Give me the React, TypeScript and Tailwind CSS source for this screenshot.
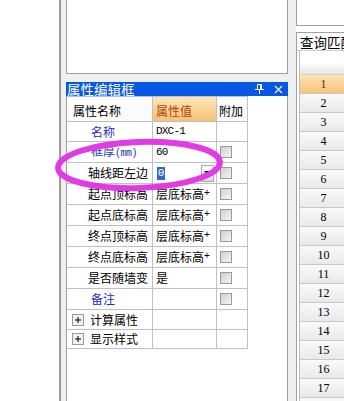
import React from 'react';

type Row = {
  name: string;
  blue?: boolean;
  value?: React.ReactNode;
  check?: boolean;
  group?: boolean;
  h: string;
};

const Check = () => (
  <span className="block w-[12px] h-[12px] border border-[#9a9a9a] bg-linear-to-br from-[#cfcfcf] to-[#f6f6f6]" />
);

const Plus = () => (
  <svg width="12" height="12" viewBox="0 0 12 12" className="shrink-0">
    <rect x="0.5" y="0.5" width="11" height="11" fill="#f2f2f2" stroke="#9a9a9a" />
    <path d="M3 6h6M6 3v6" stroke="#000" strokeWidth="1" />
  </svg>
);

const Mono = ({ children }: { children: React.ReactNode }) => (
  <span className="font-['Liberation_Mono',monospace] text-[11px] tracking-[-0.8px]">{children}</span>
);

const Elev = () => (
  <span>
    层底标高<span className="font-['Liberation_Sans',sans-serif] text-[10px] align-top">+</span>
  </span>
);

const Editor = () => (
  <div className="flex items-center w-full h-full">
    <span className="ml-[1px] h-[13px] w-[8px] bg-[#316ac5] text-white font-['Liberation_Mono',monospace] text-[11px] leading-[13px] text-center">
      0
    </span>
    <span className="ml-auto mr-[2px] w-[13px] h-[17px] border border-[#a8a8a8] bg-linear-to-b from-white to-[#dcdcdc] flex items-center justify-center">
      <svg width="7" height="4" viewBox="0 0 7 4">
        <path d="M0 0h7L3.5 4z" fill="#000" />
      </svg>
    </span>
  </div>
);

const rows: Row[] = [
  { name: '名称', blue: true, value: <Mono>DXC-1</Mono>, h: 'h-[20px]' },
  { name: '框厚', blue: true, value: <Mono>60</Mono>, check: true, h: 'h-[21px]' },
  { name: '轴线距左边', value: 'editor', check: true, h: 'h-[21px]' },
  { name: '起点顶标高', value: <Elev />, check: true, h: 'h-[21px]' },
  { name: '起点底标高', value: <Elev />, check: true, h: 'h-[21px]' },
  { name: '终点顶标高', value: <Elev />, check: true, h: 'h-[21px]' },
  { name: '终点底标高', value: <Elev />, check: true, h: 'h-[21px]' },
  { name: '是否随墙变', value: '是', check: true, h: 'h-[21px]' },
  { name: '备注', blue: true, check: true, h: 'h-[21px]' },
  { name: '计算属性', group: true, h: 'h-[20px]' },
  { name: '显示样式', group: true, h: 'h-[19px]' },
];

function PropertyPanel() {
  return (
    <div className="flex-1 flex flex-col min-h-0">
      <div className="h-[14px] shrink-0 bg-[#0756e4] flex items-center text-white text-[13.5px] leading-[14px] pl-[1px] pr-[3px]">
        <span>属性编辑框</span>
        <svg width="9" height="10" viewBox="0 0 9 10" className="ml-auto mr-[10px]">
          <path d="M2.5 0.5h4M2.5 0.5v5M5.5 0.5v5M6.5 0.5v5M0 5.5h9M4.5 5.5v4.5" stroke="#fff" strokeWidth="1" />
        </svg>
        <svg width="9" height="9" viewBox="0 0 9 9" className="mr-[2px]">
          <path d="M1 1l7 7M8 1l-7 7" stroke="#fff" strokeWidth="1.1" />
        </svg>
      </div>
      <div className="flex-1 bg-white border-x border-[#a0a0a0]">
        <div className="w-[181px] border-t border-[#c0c0c0]">
          <div className="flex h-[25px] border-b border-[#c0c0c0] text-[12px]">
            <div className="w-[86px] border-r border-[#c0c0c0] pl-[6px] pt-[3px] flex items-center bg-[#fbfbfb]">属性名称</div>
            <div className="w-[64px] border-r border-[#c0c0c0] pl-[3px] pt-[3px] flex items-center bg-linear-to-b from-[#fde6bb] to-[#f5c172] text-[#b7410e]">
              属性值
            </div>
            <div className="w-[31px] border-r border-[#c0c0c0] pl-[2px] pt-[3px] flex items-center bg-[#fbfbfb]">附加</div>
          </div>
          {rows.map((r) => (
            <div key={r.name} className={`flex ${r.h} border-b border-[#c0c0c0] text-[12px]`}>
              <div
                className={`w-[86px] border-r border-[#c0c0c0] flex items-center whitespace-nowrap ${
                  r.group ? 'pl-[5px] gap-[6px]' : r.blue ? 'pl-[24px] text-[#1c2fc4]' : 'pl-[21px]'
                }`}
              >
                {r.group && <Plus />}
                <span>
                  {r.name}
                  {r.name === '框厚' && (
                    <span className="font-['Liberation_Mono',monospace] text-[10px] tracking-[-0.5px]">(mm)</span>
                  )}
                </span>
              </div>
              <div className="w-[64px] border-r border-[#c0c0c0] flex items-center pl-[3px] whitespace-nowrap overflow-hidden">
                {r.value === 'editor' ? <Editor /> : r.value}
              </div>
              <div className="w-[31px] border-r border-[#c0c0c0] flex items-center pl-[3px]">
                {r.check && <Check />}
              </div>
            </div>
          ))}
        </div>
      </div>
    </div>
  );
}

function RightPanel() {
  const nums = Array.from({ length: 18 }, (_, i) => i + 1);
  return (
    <div className="flex-1 flex flex-col min-w-0">
      <div className="h-[26px] shrink-0 bg-white border-l border-b border-[#a0a0a0]" />
      <div className="h-[6px] shrink-0" />
      <div className="flex-1 flex flex-col bg-white border-l border-t border-[#a0a0a0] min-h-0">
        <div className="h-[17px] shrink-0 pl-[3px] pt-[1px] text-[13.5px] leading-[17px] whitespace-nowrap">查询匹配</div>
        <div className="flex-1 flex pl-[2px] border-t border-[#d0d0d0]">
          <div className="w-[48px] shrink-0 flex flex-col border-l border-[#bdbdbd]">
            <div className="h-[24px] shrink-0 bg-linear-to-b from-white via-white to-[#e6e6e6] border-b border-[#d0d0d0]" />
            {nums.map((n) => (
              <div
                key={n}
                className={`h-[19px] shrink-0 flex items-center justify-center border-b border-[#c8c8c8] font-['Liberation_Serif',serif] text-[12px] ${
                  n === 1
                    ? 'bg-linear-to-b from-[#fde3b2] to-[#f7c37b] text-[#7a1d00]'
                    : 'bg-linear-to-b from-[#fafafa] to-[#e9e9e9]'
                }`}
              >
                {n}
              </div>
            ))}
          </div>
        </div>
      </div>
    </div>
  );
}

export default function App() {
  return (
    <div className="relative flex w-[344px] h-[401px] overflow-hidden bg-white text-black font-['Noto_Sans_CJK_SC','Liberation_Sans',sans-serif] leading-none">
      <div className="w-[59px] shrink-0 bg-white" />
      <div className="w-[2px] shrink-0 bg-[#9a9a9a]" />
      <div className="w-[235px] shrink-0 bg-[#efefef] pl-[5px] pr-[8px] flex flex-col">
        <div className="h-[74px] shrink-0 bg-white border-x border-b border-[#a0a0a0]" />
        <div className="h-[8px] shrink-0" />
        <PropertyPanel />
      </div>
      <RightPanel />
      <svg className="absolute left-0 top-0 pointer-events-none" width="344" height="401">
        <ellipse
          cx="139"
          cy="165"
          rx="81"
          ry="23"
          fill="none"
          stroke="#e33be3"
          strokeWidth="6"
          transform="rotate(-2 139 165)"
        />
      </svg>
    </div>
  );
}
